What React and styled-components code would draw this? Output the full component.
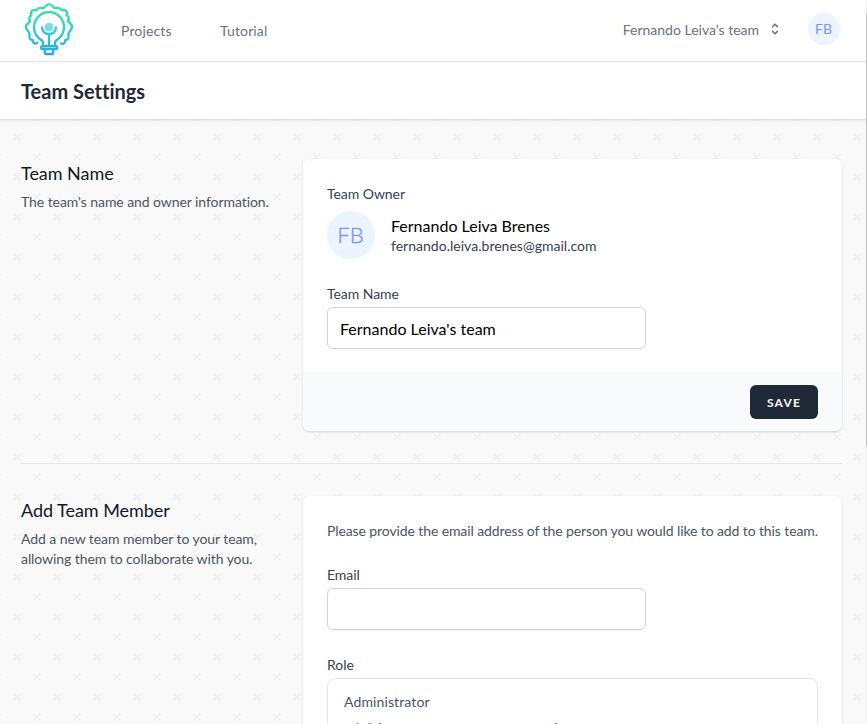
import React from "react";
import styled, { createGlobalStyle } from "styled-components";

const crosses = encodeURIComponent(
  '<svg xmlns="http://www.w3.org/2000/svg" width="40" height="40" viewBox="0 0 40 40"><path fill="#f2f2f2" d="M0 38.59l2.83-2.83 1.41 1.41L1.41 40H0v-1.41zM0 1.4l2.83 2.83 1.41-1.41L1.41 0H0v1.41zM38.59 40l-2.83-2.83 1.41-1.41L40 38.59V40h-1.41zM40 1.41l-2.83 2.83-1.41-1.41L38.59 0H40v1.41zM20 18.6l2.83-2.83 1.41 1.41L21.41 20l2.83 2.83-1.41 1.41L20 21.41l-2.83 2.83-1.41-1.41L18.59 20l-2.83-2.83 1.41-1.41L20 18.59z"/></svg>'
);

const GlobalStyle = createGlobalStyle`
  *, *::before, *::after { box-sizing: border-box; }
  html, body { margin: 0; height: 724px; overflow: hidden; }
  body { font-family: Lato, "Liberation Sans", sans-serif; font-size: 14px; line-height: 20px; color: #000; font-variant-ligatures: none; }
  h1, h2, p { margin: 0; font-weight: 400; }
`;

const Page = styled.div`
  position: relative;
  height: 724px;
  overflow: hidden;
  background: #f9f9f9 url("data:image/svg+xml,${crosses}") 17px 17px;
`;
const ScrollTrack = styled.div`
  position: absolute;
  top: 0;
  right: 0;
  width: 1px;
  height: 724px;
  background: #f1f1f1;
`;
const ScrollThumb = styled.div`
  margin-top: 14px;
  height: 432px;
  background: #c1c1c1;
`;
const NavBar = styled.nav`
  display: flex;
  align-items: center;
  height: 62px;
  padding: 0 27px 0 24px;
  background: #fff;
  border-bottom: 1px solid #e9eaec;
  color: #6b7280;
`;
const Logo = styled.svg`
  display: block;
  width: 50px;
  height: 56px;
  margin: -3px 47px 0 0;
`;
const NavLink = styled.a`
  margin-right: 48.5px;
  letter-spacing: 0.13px;
`;
const TeamSwitch = styled.button`
  display: flex;
  align-items: center;
  gap: 8px;
  margin: -2px 25px 0 auto;
  padding: 0;
  border: 0;
  background: none;
  font: inherit;
  color: inherit;
  svg { width: 16px; height: 16px; display: block; margin-top: -2px; }
`;
const Avatar = styled.div`
  display: flex;
  flex: none;
  align-items: center;
  justify-content: center;
  width: ${(p) => p.$size}px;
  height: ${(p) => p.$size}px;
  padding-right: ${(p) => p.$nudge || 1}px;
  margin-top: ${(p) => p.$lift || 0}px;
  border-radius: 50%;
  background: #ebf4ff;
  color: #7f96fb;
  font-size: ${(p) => p.$font}px;
  font-weight: ${(p) => p.$weight || 400};
  -webkit-text-stroke: ${(p) => p.$stroke || 0}px currentColor;
`;
const Header = styled.header`
  height: 57px;
  padding: 17px 21px;
  background: #fff;
  box-shadow: 0 1px 3px rgba(0, 0, 0, 0.1), 0 1px 2px rgba(0, 0, 0, 0.06);
  h1 { font-size: 20px; line-height: 25px; font-weight: 700; color: #1f2937; }
`;
const Main = styled.main`
  padding: 40px 25px 0 21px;
`;
const Section = styled.section`
  display: grid;
  grid-template-columns: 258px 539px;
  gap: 24px;
`;
const Intro = styled.div`
  h2 { font-size: 18px; line-height: 28px; color: #111827; letter-spacing: -0.04px; }
  p { margin-top: 5px; color: #4b5563; white-space: nowrap; letter-spacing: -0.07px; }
`;
const Card = styled.div`
  overflow: hidden;
  height: ${(p) => p.$height}px;
  border-radius: 6px;
  background: #fff;
  box-shadow: 0 1px 3px rgba(0, 0, 0, 0.1), 0 1px 2px rgba(0, 0, 0, 0.06);
`;
const CardBody = styled.div`
  height: ${(p) => p.$height || 300}px;
  padding: 25px 24px 0;
`;
const Label = styled.div`
  color: #374151;
  letter-spacing: -0.05px;
`;
const Owner = styled.div`
  display: flex;
  align-items: center;
  gap: 16px;
  margin: 7px 0 25px;
`;
const OwnerName = styled.div`
  margin-top: 1px;
  font-size: 16px;
  line-height: 20px;
`;
const OwnerEmail = styled.div`
  color: #374151;
  line-height: 19px;
  letter-spacing: 0.02px;
`;
const Input = styled.input`
  display: block;
  width: 319px;
  height: 42px;
  margin: 3px 0 0;
  padding: 9px 12px;
  border: 1px solid #d1d5db;
  border-radius: 6px;
  outline: 0;
  background: #fff;
  box-shadow: 0 1px 2px rgba(0, 0, 0, 0.05);
  font: 16px/22px Lato, sans-serif;
  color: #000;
`;
const CardFooter = styled.div`
  display: flex;
  justify-content: flex-end;
  height: 60px;
  padding: 13px 24px 0;
  background: #f9fafb;
`;
const SaveButton = styled.button`
  width: 68px;
  height: 34px;
  padding: 1px 0 0;
  border: 0;
  border-radius: 6px;
  background: #1f2937;
  color: #fff;
  font: 700 12px/16px Lato, sans-serif;
  letter-spacing: 1.2px;
`;
const Divider = styled.hr`
  height: 1px;
  margin: 32px 0;
  border: 0;
  background: #e5e7eb;
`;
const Hint = styled.p`
  color: #4b5563;
  white-space: nowrap;
  letter-spacing: -0.105px;
  margin-bottom: 24px;
`;
const RoleList = styled.div`
  height: 160px;
  margin-top: 3px;
  padding: 13px 16px;
  border: 1px solid #e5e7eb;
  border-radius: 8px;
  color: #4b5563;
  letter-spacing: 0.12px;
  p { margin-top: 8px; font-size: 12px; line-height: 16px; letter-spacing: 0; }
`;
const RoleLabel = styled(Label)`
  margin-top: 25px;
`;

const BulbLogo = () => (
  <Logo viewBox="24 1 50 56" fill="none" stroke="url(#bulb)" strokeWidth="2.3" strokeLinecap="round" strokeLinejoin="round">
    <defs>
      <linearGradient id="bulb" gradientUnits="userSpaceOnUse" x1="49" y1="3" x2="49" y2="56">
        <stop offset="0" stopColor="#35e896" />
        <stop offset="0.5" stopColor="#2bcfc8" />
        <stop offset="1" stopColor="#27a5ee" />
      </linearGradient>
    </defs>
    <path d="M37 42.800C34.500 44.500 32.500 42.500 32.700 40C29.500 40 28.600 37 29.800 34.300C28.500 30.500 26 30 26 27C26 24 28.500 23.500 30.200 21C28.500 18.500 29 16.500 31.500 15.200C30 11 32.500 9.500 36.200 10.300C38 7.500 40.500 7.500 43.200 8.200C45.500 7.500 46 4.200 49 4.200C52 4.200 52.500 7.500 54.800 8.200C57.500 7.500 60 7.500 61.800 10.300C65.500 9.500 68 11 66.500 15.200C69 16.500 69.500 18.500 67.800 21C69.500 23.500 72 24 72 27C72 30 69.500 30.500 68.200 34.300C69.400 37 68.500 40 65.300 40C65.500 42.800 63.500 44.500 61 43.500" />
    <path d="M43 45.500V42.500C43 41 42 40.500 40.500 39.500A15 15 0 1 1 57.500 39.500C56 40.500 55 41 55 42.500V45.500" />
    <path d="M49 45V34.500M42 27.500C42.500 32 45.500 34 49 34C52.500 34 55.500 32 56 27.500" />
    <rect x="41.200" y="46.200" width="15.800" height="2.800" rx="0.800" />
    <path d="M44.800 50.500V53Q44.800 54.200 46 54.200H52Q53.200 54.200 53.200 53V50.500" />
    <circle cx="49" cy="27.200" r="4.400" fill="#7fdbe4" stroke="none" />
  </Logo>
);

export default function App() {
  return (
    <Page>
      <GlobalStyle />
      <NavBar>
        <BulbLogo />
        <NavLink>Projects</NavLink>
        <NavLink>Tutorial</NavLink>
        <TeamSwitch>
          Fernando Leiva's team
          <svg viewBox="0 0 20 20" fill="#6b7280">
            <path fillRule="evenodd" clipRule="evenodd" d="M10 3a1 1 0 01.707.293l3 3a1 1 0 01-1.414 1.414L10 5.414 7.707 7.707a1 1 0 01-1.414-1.414l3-3A1 1 0 0110 3zm-3.707 9.293a1 1 0 011.414 0L10 14.586l2.293-2.293a1 1 0 011.414 1.414l-3 3a1 1 0 01-1.414 0l-3-3a1 1 0 010-1.414z" />
          </svg>
        </TeamSwitch>
        <Avatar $size={32} $font={14} $lift={-3}>FB</Avatar>
      </NavBar>
      <Header>
        <h1>Team Settings</h1>
      </Header>
      <Main>
        <Section>
          <Intro>
            <h2>Team Name</h2>
            <p>The team's name and owner information.</p>
          </Intro>
          <Card $height={272}>
            <CardBody $height={213}>
              <Label>Team Owner</Label>
              <Owner>
                <Avatar $size={48} $font={22} $nudge={1} $weight={300} $stroke={0.4}>FB</Avatar>
                <div>
                  <OwnerName>Fernando Leiva Brenes</OwnerName>
                  <OwnerEmail>fernando.leiva.brenes@gmail.com</OwnerEmail>
                </div>
              </Owner>
              <Label>Team Name</Label>
              <Input defaultValue="Fernando Leiva's team" />
            </CardBody>
            <CardFooter>
              <SaveButton>SAVE</SaveButton>
            </CardFooter>
          </Card>
        </Section>
        <Divider />
        <Section>
          <Intro>
            <h2>Add Team Member</h2>
            <p>Add a new team member to your team,<br />allowing them to collaborate with you.</p>
          </Intro>
          <Card $height={400}>
            <CardBody>
              <Hint>Please provide the email address of the person you would like to add to this team.</Hint>
              <Label>Email</Label>
              <Input />
              <RoleLabel>Role</RoleLabel>
              <RoleList>
                Administrator
                <p>Administrator users can perform any action.</p>
              </RoleList>
            </CardBody>
          </Card>
        </Section>
      </Main>
      <ScrollTrack><ScrollThumb /></ScrollTrack>
    </Page>
  );
}
